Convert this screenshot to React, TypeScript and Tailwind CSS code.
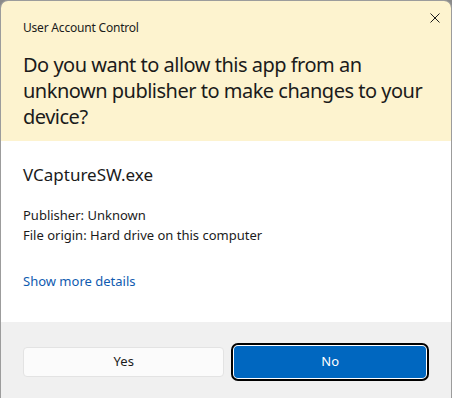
export default function App() {
  return (
    <div className="w-[452px] h-[398px] bg-[#8a8a8a] font-['Noto_Sans',sans-serif] text-[#1b1b1b]">
      <div className="h-full flex flex-col rounded-t-[8px] overflow-hidden border-t border-x border-[#9c9c9c]">
        {/* Header */}
        <div className="h-[140px] bg-[#fdf3cf] px-[22px] relative">
          <p className="text-[12px] leading-[16px] pt-[19px] tracking-[-0.2px]">User Account Control</p>
          <h1 className="mt-[16px] text-[20px] leading-[26px] tracking-[-0.5px]">
            Do you want to allow this app from an unknown publisher to make changes to your device?
          </h1>
          <button className="absolute right-[7px] top-[8px] w-[18px] h-[18px] flex items-center justify-center">
            <svg width="10" height="10" viewBox="0 0 10 10" stroke="#1b1b1b" strokeWidth="1">
              <path d="M0.5 0.5 L9.5 9.5 M9.5 0.5 L0.5 9.5" />
            </svg>
          </button>
        </div>

        {/* Body */}
        <div className="flex-1 bg-white px-[22px]">
          <p className="text-[17px] leading-[22px] mt-[23px]">VCaptureSW.exe</p>
          <div className="mt-[19px] text-[13px] leading-[20px]">
            <p>Publisher: Unknown</p>
            <p>File origin: Hard drive on this computer</p>
          </div>
          <a href="#" className="block mt-[26px] text-[13px] leading-[20px] text-[#0f5bb0]">
            Show more details
          </a>
        </div>

        {/* Footer */}
        <div className="h-[76px] bg-[#f0f0f0] flex items-center gap-[7px] px-[22px] pt-[3px]">
          <button className="w-[203px] h-[30px] rounded-[4px] bg-[#fbfbfb] border border-[#e3e3e3] text-[13px]">
            Yes
          </button>
          <div className="w-[199px] h-[38px] rounded-[7px] border-2 border-black p-[1px] bg-white">
            <button className="w-full h-full rounded-[4px] bg-[#0067c0] text-white text-[13px]">No</button>
          </div>
        </div>
      </div>
    </div>
  );
}
